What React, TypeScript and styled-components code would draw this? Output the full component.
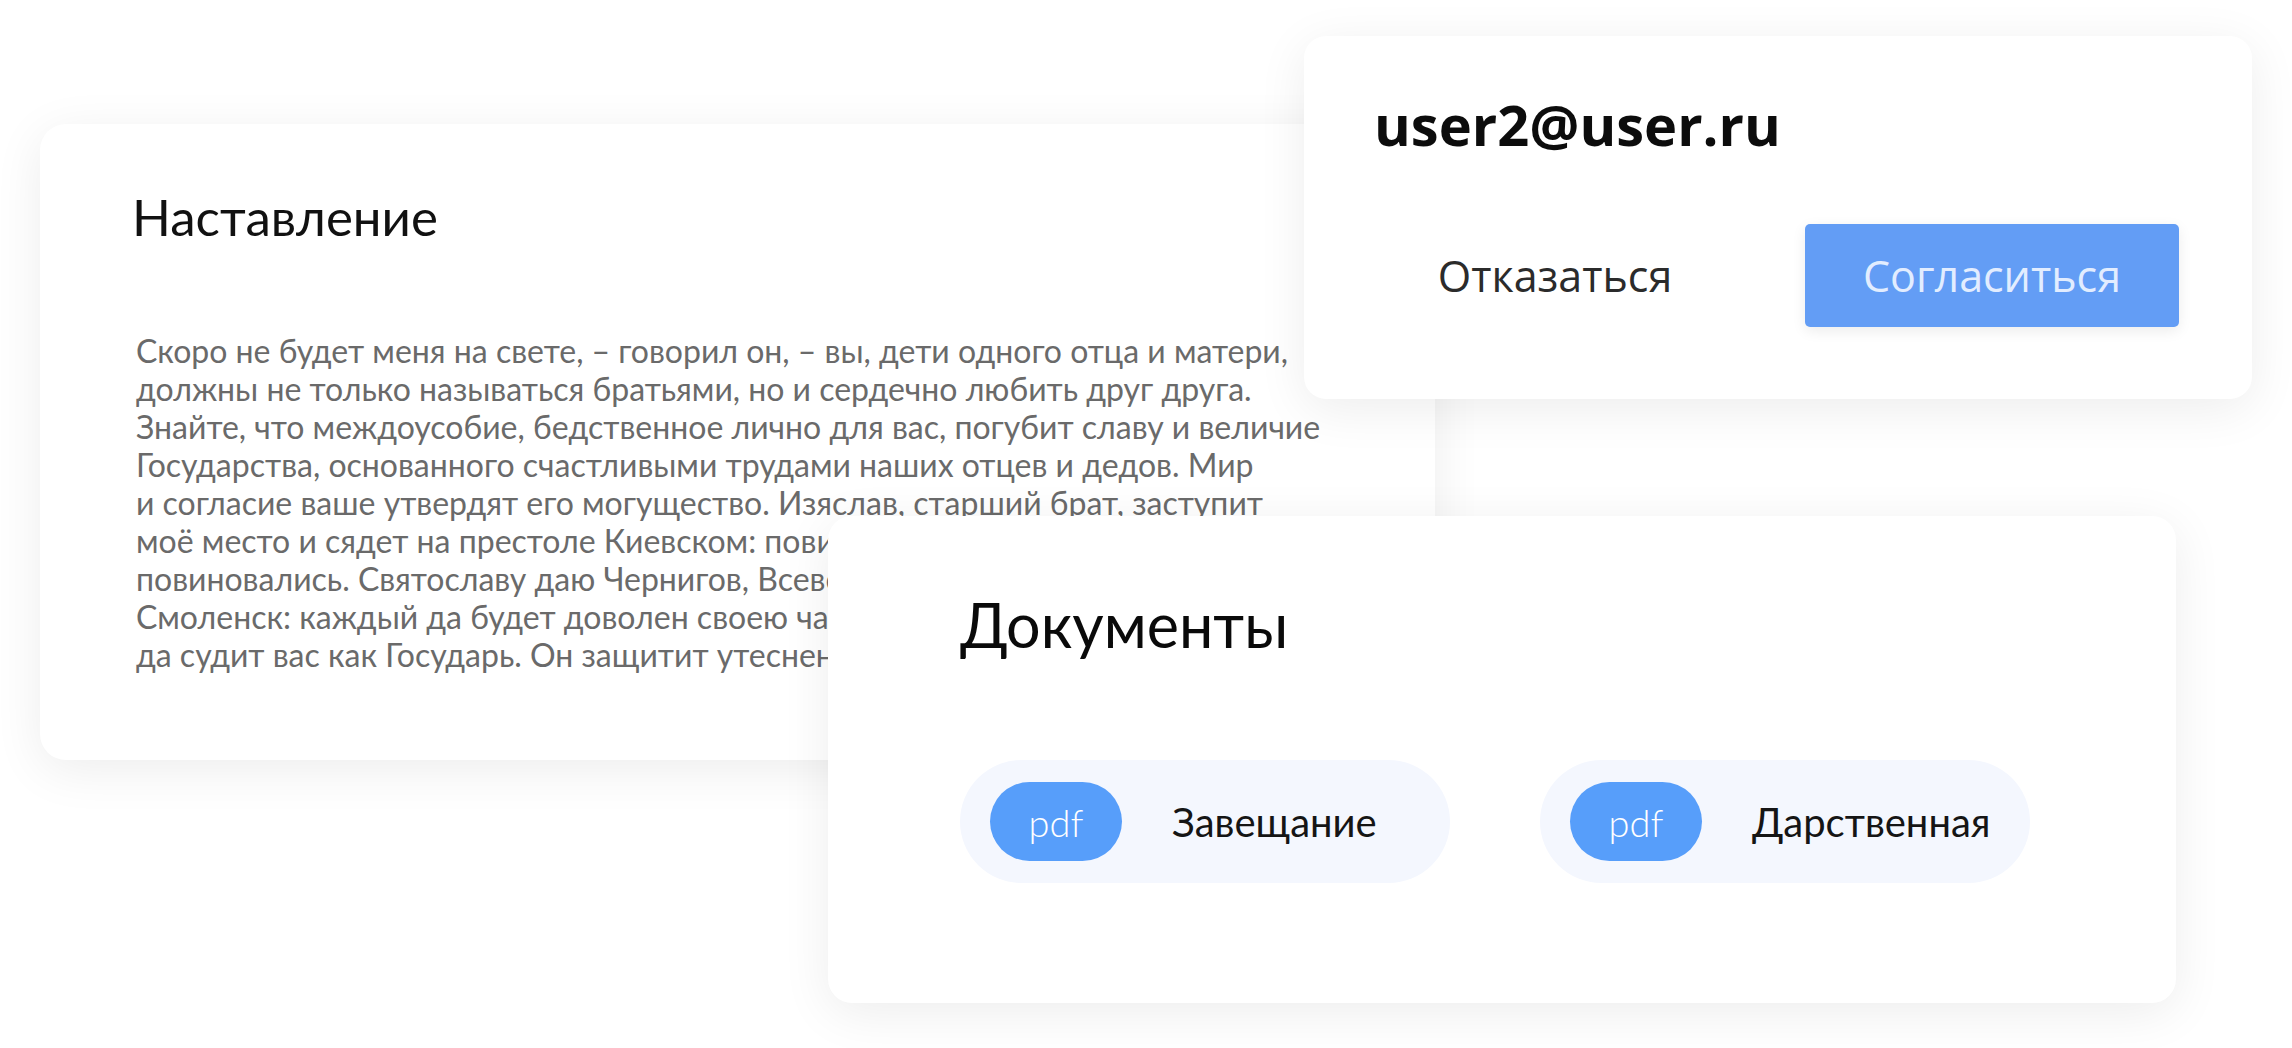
import React from "react";
import styled, { createGlobalStyle } from "styled-components";

const Global = createGlobalStyle`
  html, body { margin: 0; padding: 0; background: #ffffff; }
  body { width: 2292px; height: 1048px; overflow: hidden; font-family: "Lato", "Noto Sans", sans-serif; }
`;

const Canvas = styled.div`
  position: relative;
  width: 2292px;
  height: 1048px;
  background: #ffffff;
`;

const Card = styled.section<{ $x: number; $y: number; $w: number; $h: number; $r: number; $z: number }>`
  position: absolute;
  left: ${(p) => p.$x}px;
  top: ${(p) => p.$y}px;
  width: ${(p) => p.$w}px;
  height: ${(p) => p.$h}px;
  border-radius: ${(p) => p.$r}px;
  z-index: ${(p) => p.$z};
  background: #ffffff;
  box-shadow: 0 10px 50px rgba(0, 0, 0, 0.075);
  box-sizing: border-box;
  display: flex;
  flex-direction: column;
`;

const NoteCard = styled(Card)`
  padding: 68px 0 0 92px;
`;

const NoteTitle = styled.h2`
  margin: 0;
  font-family: "Lato", sans-serif;
  font-weight: 400;
  font-size: 51px;
  line-height: 50px;
  color: #111111;
`;

const NoteText = styled.p`
  margin: 90px 0 0 4px;
  font-family: "Lato", sans-serif;
  font-size: 32px;
  line-height: 38px;
  color: #6a6a6a;
  white-space: pre-line;
`;

const UserCard = styled(Card)`
  padding: 58px 64px 0 70px;
`;

const Email = styled.h3`
  margin: 0;
  font-family: "Open Sans", sans-serif;
  font-weight: 700;
  font-size: 56px;
  line-height: 60px;
  color: #0c0c0c;
`;

const Actions = styled.div`
  display: flex;
  gap: 63px;
  margin: 70px 0 0 -6px;
`;

const ActionButton = styled.button<{ $primary?: boolean }>`
  width: 374px;
  height: 103px;
  border: none;
  border-radius: 5px;
  padding: 0;
  font-family: "Open Sans", sans-serif;
  font-weight: 400;
  font-size: 43px;
  cursor: pointer;
  background: ${(p) => (p.$primary ? "#639df5" : "transparent")};
  color: ${(p) => (p.$primary ? "#e2edff" : "#2b2b2b")};
  box-shadow: ${(p) => (p.$primary ? "0 4px 14px rgba(0,0,0,0.08)" : "none")};
`;

const DocsCard = styled(Card)`
  padding: 78px 0 0 132px;
`;

const DocsTitle = styled.h2`
  margin: 0;
  font-family: "Lato", sans-serif;
  font-weight: 400;
  font-size: 61px;
  line-height: 62px;
  color: #0a0a0a;
`;

const DocList = styled.div`
  display: flex;
  gap: 90px;
  margin-top: 104px;
`;

const DocPill = styled.div`
  width: 490px;
  height: 123px;
  border-radius: 62px;
  background: #f4f7fe;
  box-sizing: border-box;
  padding-left: 30px;
  display: flex;
  align-items: center;
  gap: 50px;
`;

const Badge = styled.span`
  width: 132px;
  height: 79px;
  border-radius: 40px;
  background: #579efa;
  color: #ffffff;
  font-family: "Lato", sans-serif;
  font-weight: 300;
  font-size: 38px;
  display: flex;
  align-items: center;
  justify-content: center;
`;

const DocName = styled.span`
  font-family: "Lato", sans-serif;
  font-size: 40px;
  color: #151515;
`;

const text = [
  "Скоро не будет меня на свете, – говорил он, – вы, дети одного отца и матери,",
  "должны не только называться братьями, но и сердечно любить друг друга.",
  "Знайте, что междоусобие, бедственное лично для вас, погубит славу и величие",
  "Государства, основанного счастливыми трудами наших отцев и дедов. Мир",
  "и согласие ваше утвердят его могущество. Изяслав, старший брат, заступит",
  "моё место и сядет на престоле Киевском: повинуйтесь ему, как мне вы",
  "повиновались. Святославу даю Чернигов, Всеволоду Переяславль, Вячеславу",
  "Смоленск: каждый да будет доволен своею частью, а старший брат",
  "да судит вас как Государь. Он защитит утесненного.",
].join("\n");

export default function App() {
  return (
    <Canvas>
      <Global />
      <NoteCard $x={40} $y={124} $w={1395} $h={636} $r={26} $z={1}>
        <NoteTitle>Наставление</NoteTitle>
        <NoteText>{text}</NoteText>
      </NoteCard>
      <UserCard $x={1304} $y={36} $w={948} $h={363} $r={22} $z={2}>
        <Email>user2@user.ru</Email>
        <Actions>
          <ActionButton>Отказаться</ActionButton>
          <ActionButton $primary>Согласиться</ActionButton>
        </Actions>
      </UserCard>
      <DocsCard $x={828} $y={516} $w={1348} $h={487} $r={24} $z={3}>
        <DocsTitle>Документы</DocsTitle>
        <DocList>
          <DocPill>
            <Badge>pdf</Badge>
            <DocName>Завещание</DocName>
          </DocPill>
          <DocPill>
            <Badge>pdf</Badge>
            <DocName>Дарственная</DocName>
          </DocPill>
        </DocList>
      </DocsCard>
    </Canvas>
  );
}
